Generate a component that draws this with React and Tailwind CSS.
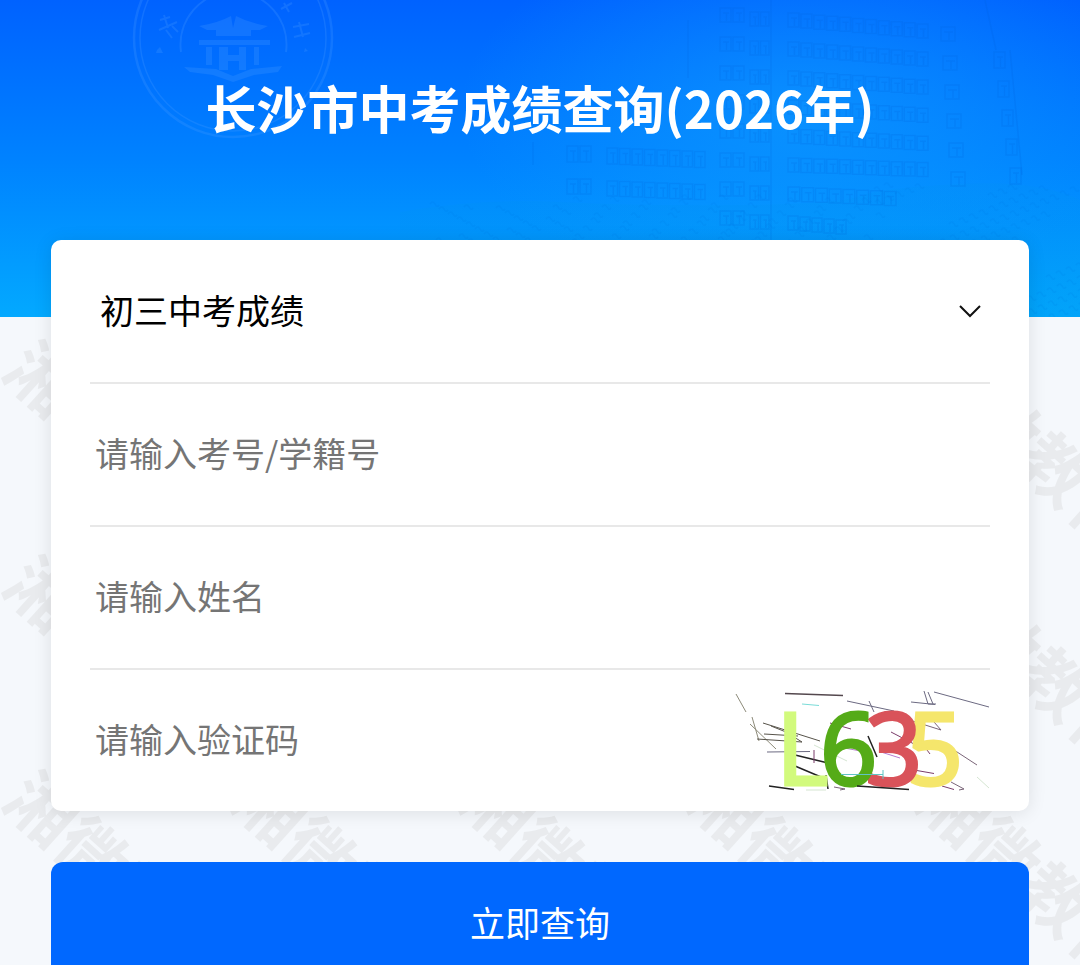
import React, { useState } from "react";

const WATERMARK_COLUMNS = [0, 1, 2, 3, 4];
const WATERMARK_ROWS = [0, 1, 2];

function Watermark() {
  return (
    <svg
      aria-hidden="true"
      className="pointer-events-none absolute inset-0 h-full w-full select-none"
    >
      <g
        fill="#e9ebee"
        fontFamily="'Noto Sans CJK SC', sans-serif"
        fontSize="68"
        fontWeight="700"
      >
        {WATERMARK_ROWS.map((row) =>
          WATERMARK_COLUMNS.map((col) => (
            <g
              key={`${row}-${col}`}
              transform={`translate(${42 + col * 228} ${379 + row * 215}) rotate(42)`}
            >
              <text x="-34" y="25">
                湘微教育
              </text>
            </g>
          ))
        )}
      </g>
    </svg>
  );
}

function Windows({ x, y, width, height, count, slant = 0 }) {
  const step = width / count;
  const items = [];
  for (let i = 0; i < count; i += 1) {
    const left = x + i * step;
    const top = y + (slant * i) / count;
    items.push(
      <path
        key={i}
        d={`M${left} ${top}h${step - 2}v${height}h${2 - step}z M${left + 3} ${top + 5}h${step - 7} M${left + step / 2} ${top + 5}v${height - 6}`}
      />
    );
  }
  return <>{items}</>;
}

function Emblem() {
  return (
    <g fill="none" stroke="#4b9dff" strokeOpacity="0.24">
      <circle cx="233" cy="38" r="99" strokeWidth="2.5" />
      <circle cx="233" cy="38" r="93" strokeWidth="1.5" />
      <path d="M181 52A53 53 0 1 1 286 52" strokeWidth="2" />
      <g fill="#4b9dff" fillOpacity="0.24" stroke="none">
        <path d="M199 26Q218 23 231 16L233 28L236 16Q249 23 268 26L260 30H251V36H216V30H207Z" />
        <path d="M199 40H270V45H199Z" />
        <path d="M206 47H212V65H206Z M254 47H259V65H254Z" />
        <path d="M219 47H228V55H239V47H246V70H239V61H228V70H219Z" />
        <path d="M184 67L216 69L233 76L251 69L282 66L278 72L254 75L233 82L213 75L190 72Z" />
        <path d="M157 50L160 47L163 53H156Z M305 48L308 51L304 52Z" />
      </g>
      <path
        strokeWidth="2"
        d="M160 20L170 17M164 15L168 28M159 30L177 22M166 30L172 38M172 26L178 32M281 9L292 3M284 3L289 12M293 27L309 24M299 22L303 37M294 37L310 33"
      />
    </g>
  );
}

const FLOORS = [0, 1, 2, 3, 4, 5, 6, 7];

function Foliage() {
  const leaves = [];
  for (let i = 0; i < 330; i += 1) {
    const x = 430 + ((i * 97) % 650);
    const edge = x > 870 ? 185 : x > 570 ? 196 : 204;
    const y = edge + ((i * 53) % (317 - edge));
    leaves.push(`M${x} ${y}q3 -4 5 0t4 1`);
  }
  return <path d={leaves.join("")} fill="none" stroke="#0077e0" strokeOpacity="0.12" strokeWidth="1.5" />;
}

function HeroArt() {
  return (
    <svg
      aria-hidden="true"
      className="absolute inset-0 h-full w-full"
      viewBox="0 0 1080 317"
      preserveAspectRatio="xMidYMid slice"
    >
      <defs>
        <linearGradient id="sky" x1="0" y1="0" x2="0" y2="1">
          <stop offset="0" stopColor="#0062ff" />
          <stop offset="0.5" stopColor="#0082ff" />
          <stop offset="1" stopColor="#03a9ff" />
        </linearGradient>
        <radialGradient id="glow">
          <stop offset="0" stopColor="#10a0ff" stopOpacity="0.6" />
          <stop offset="1" stopColor="#10a0ff" stopOpacity="0" />
        </radialGradient>
        <linearGradient id="ground" x1="0" y1="0" x2="0" y2="1">
          <stop offset="0" stopColor="#0092ec" stopOpacity="0.15" />
          <stop offset="1" stopColor="#0098ec" stopOpacity="0.3" />
        </linearGradient>
      </defs>
      <rect width="1080" height="317" fill="url(#sky)" />
      <ellipse cx="800" cy="110" rx="340" ry="190" fill="url(#glow)" />
      <path d="M400 212Q480 198 560 202T740 205T860 196T960 184T1080 200V317H400Z" fill="url(#ground)" />
      <Emblem />
      <g fill="none" stroke="#0060d8" strokeOpacity="0.17" strokeWidth="1.5">
        <path d="M688 20V78M771 0V240M985 0L996 50M1010 50L1022 175M533 142V165" />
        {FLOORS.map((floor) => {
          const y = 8 + floor * 29;
          return (
            <g key={floor}>
              <Windows x={720} y={y} width={26} height={14} count={2} />
              <Windows x={750} y={y + 4} width={21} height={14} count={2} />
              <Windows
                x={788}
                y={y + 5}
                width={floor === 7 ? 60 : floor === 6 ? 110 : 142}
                height={14}
                count={floor === 7 ? 5 : floor === 6 ? 8 : 11}
                slant={floor > 4 ? 5 : 12 - floor}
              />
              {floor < 6 && <Windows x={941 + floor * 2} y={y + 19} width={16} height={14} count={1} />}
              {floor > 0 && floor < 6 && (
                <Windows x={990 + floor * 4} y={y + 15} width={13} height={16} count={1} />
              )}
            </g>
          );
        })}
        <Windows x={567} y={146} width={26} height={16} count={2} />
        <Windows x={607} y={148} width={100} height={16} count={8} slant={4} />
        <Windows x={567} y={179} width={26} height={15} count={2} />
        <Windows x={607} y={181} width={100} height={15} count={8} slant={4} />
      </g>
      <Foliage />
    </svg>
  );
}

function Captcha() {
  return (
    <svg viewBox="735 690 256 102" className="h-[102px] w-[256px]" role="img" aria-label="L635">
      <g fill="none" strokeWidth="1">
        <path stroke="#54484e" strokeWidth="1.5" d="M786 693.5L844 695.5" />
        <path stroke="#8d8b7a" d="M737 694L747 712M753 717L760 741M751 724L777 749" />
        <path stroke="#57534a" d="M764 723L821 741M765 734L799 736M758 739L803 742M772 726L787 732L803 742" />
        <path stroke="#6c6a82" d="M768 752L811 751.5M848 701L895 711M870 701L875 712M935 692L990 707M912 702L936 704.5M925 691L929 704L937 704M929 692L934 704" />
        <path stroke="#7adcd8" d="M803 704L820 705.5" />
        <path stroke="#222" strokeWidth="1.5" d="M796 755L829 763M796 766L822 777M770 786L795 789.5M827 775L829 789" />
        <path stroke="#7b3d6b" d="M815 750L815 763M831 723L852 729M892 732L915 744M915 770L935 773.5M925 746L931 754M943 786L955 789.5" />
        <path stroke="#b77ad0" d="M840 747L867 752M882 752L901 758" />
        <path stroke="#7a6578" d="M885 712L942 730M935 722L942 730M955 750L978 765M952 782L965 789L960 790M835 787L846 789L841 790" />
        <path stroke="#d5e6d2" d="M815 745L848 761M978 777L990 788M807 790H827" />
      </g>
      <g fontFamily="'Noto Sans', sans-serif" fontSize="100" strokeWidth="3">
        <text x="777" y="785" fill="#d2fa7d" stroke="#d2fa7d">L</text>
        <text x="907" y="785" fill="#f5e66c" stroke="#f5e66c">5</text>
        <text x="866" y="785" fill="#d9535a" stroke="#d9535a">3</text>
        <text x="821" y="785" fill="#55ab18" stroke="#55ab18">6</text>
      </g>
      <g fill="none">
        <path stroke="#222" strokeWidth="1.5" d="M858 786L910 789.5M869 736L878 757" />
        <path stroke="#5fc4c4" d="M842 774.5L884 774.5M884 770V779" />
      </g>
    </svg>
  );
}

const inputClass =
  "h-full min-w-0 flex-1 bg-transparent px-[5px] pb-[5px] text-[34px] text-[#333] outline-none placeholder:text-[#757575] placeholder:opacity-100";
const rowClass = "flex h-[143px] items-center border-b-2 border-[#e8e8e8]";

export default function App() {
  const [values, setValues] = useState({ id: "", name: "", code: "" });
  const update = (key) => (event) => setValues({ ...values, [key]: event.target.value });

  return (
    <div
      lang="zh-CN"
      className="relative min-h-screen overflow-hidden bg-[#f5f8fc] font-['Noto_Sans_CJK_SC',sans-serif]"
    >
      <Watermark />
      <header className="relative h-[317px] pt-[69px]">
        <HeroArt />
        <h1 className="relative text-center text-[51px] leading-[76px] font-bold text-white">
          长沙市中考成绩查询(2026年)
        </h1>
      </header>

      <form
        className="relative -mt-[77px] flex flex-col gap-[51px] px-[51px]"
        onSubmit={(event) => event.preventDefault()}
      >
        <div className="rounded-[10px] bg-white px-[39px] pt-px shadow-[0_2px_18px_rgba(0,0,0,0.1)]">
          <div className={`relative ${rowClass}`}>
            <label htmlFor="exam" className="sr-only">考试类型</label>
            <select
              id="exam"
              className="h-full w-full appearance-none bg-transparent px-[10px] pb-[5px] text-[34px] text-black outline-none"
            >
              <option>初三中考成绩</option>
            </select>
            <svg
              aria-hidden="true"
              className="pointer-events-none absolute right-[8px] h-6 w-6"
              viewBox="0 0 24 24"
              fill="none"
              stroke="#111"
              strokeWidth="2"
            >
              <path d="M2 6L12 16L22 6" />
            </svg>
          </div>
          <div className={rowClass}>
            <label htmlFor="student-id" className="sr-only">考号/学籍号</label>
            <input id="student-id" type="text" className={inputClass} placeholder="请输入考号/学籍号" value={values.id} onChange={update("id")} />
          </div>
          <div className={rowClass}>
            <label htmlFor="student-name" className="sr-only">姓名</label>
            <input id="student-name" type="text" className={inputClass} placeholder="请输入姓名" value={values.name} onChange={update("name")} />
          </div>
          <div className="flex h-[141px] items-center">
            <label htmlFor="code" className="sr-only">验证码</label>
            <input id="code" type="text" className={inputClass} placeholder="请输入验证码" value={values.code} onChange={update("code")} />
            <button type="button" className="shrink-0">
              <Captcha />
            </button>
          </div>
        </div>

        <button type="submit" className="h-[126px] w-full rounded-[12px] bg-[#0068ff] pb-[5px] text-[35px] text-white">
          立即查询
        </button>
      </form>
    </div>
  );
}
